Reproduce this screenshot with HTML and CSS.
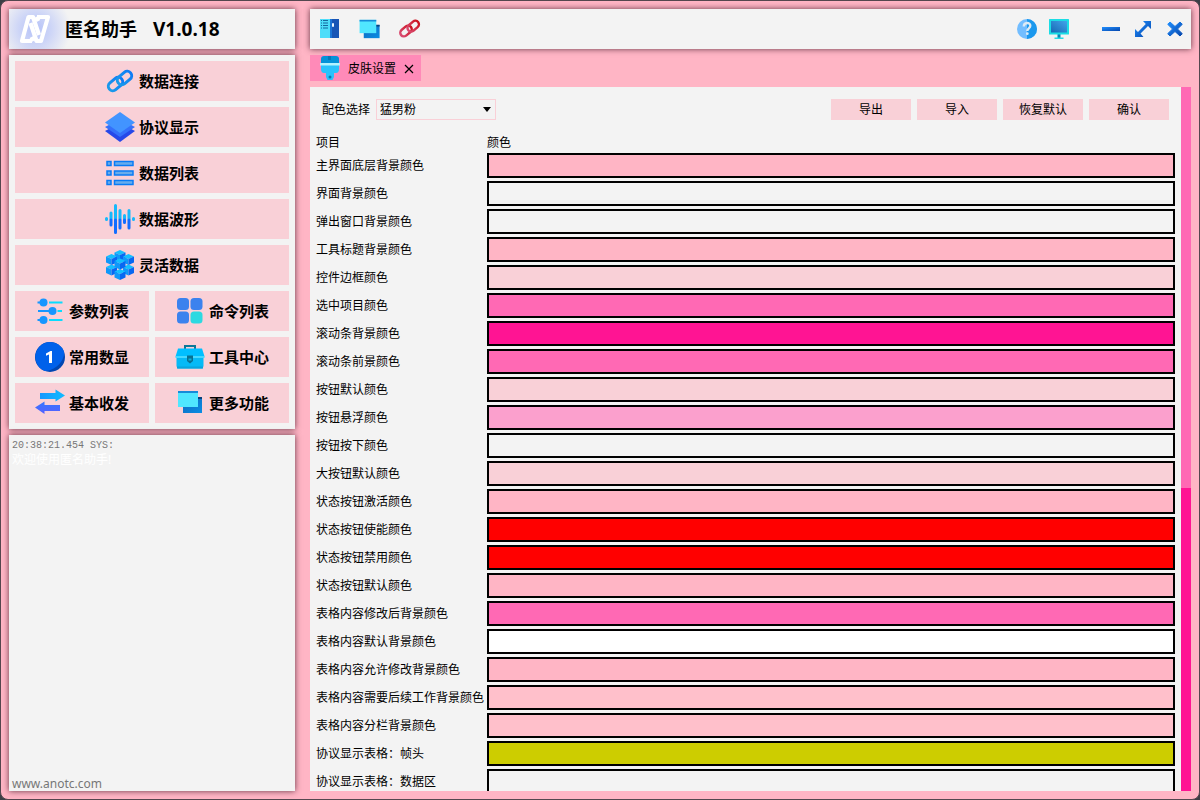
FILE: index.html
```html
<!DOCTYPE html>
<html lang="zh-CN">
<head>
<meta charset="utf-8">
<title>匿名助手 V1.0.18</title>
<link rel="stylesheet" href="styles.css">
</head>
<body>
<svg class="defs" aria-hidden="true">
  <defs>
    <linearGradient id="g-blue" x1="0" y1="0" x2="1" y2="1"><stop offset="0" stop-color="#1f8fff"/><stop offset="1" stop-color="#0546ac"/></linearGradient>
    <linearGradient id="g-link" x1="0" y1="0" x2="1" y2="0"><stop offset="0" stop-color="#1b9bea"/><stop offset="1" stop-color="#0f7bf5"/></linearGradient>
    <linearGradient id="g-red" x1="0" y1="0" x2="1" y2="0"><stop offset="0" stop-color="#d94a70"/><stop offset="1" stop-color="#cc1420"/></linearGradient>
    <linearGradient id="g-back" x1="0" y1="0" x2="1" y2="1"><stop offset="0" stop-color="#0f66bd"/><stop offset="1" stop-color="#0a8ee4"/></linearGradient>
    <linearGradient id="g-screen" x1="0" y1="1" x2="1" y2="0"><stop offset="0" stop-color="#1769b4"/><stop offset="1" stop-color="#41a4ea"/></linearGradient>
    <linearGradient id="g-right" x1="0" y1="0" x2="1" y2="0"><stop offset="0" stop-color="#1598ff"/><stop offset="1" stop-color="#10bbff"/></linearGradient>
    <linearGradient id="g-left" x1="0" y1="0" x2="0" y2="1"><stop offset="0" stop-color="#3478ff"/><stop offset="1" stop-color="#5860ff"/></linearGradient>
    <g id="chain" fill="none" stroke-width="3">
      <rect x="2.500" y="13.500" width="16" height="9" rx="4.500" transform="rotate(-40 10.500 18)"/>
      <rect x="11.500" y="7.500" width="16" height="9" rx="4.500" transform="rotate(-40 19.500 12)"/>
    </g>
    <g id="windows">
      <path d="M7 8h19v16H7z" fill="url(#g-back)"/>
      <path d="M21 8h5v2h-5z" fill="#07417b"/>
      <path d="M2 2h20v16H2z" fill="#50e6ff"/>
      <path d="M2 2h20v2H2z" fill="#168bd8"/>
    </g>
    <g id="cube">
      <path d="M5.500 0L11 2.500 5.500 5 0 2.500z" fill="#14bfff"/>
      <path d="M0 2.500L5.500 5v6L0 8.500z" fill="#0f98fa"/>
      <path d="M11 2.500L5.500 5v6L11 8.500z" fill="#0868f2"/>
    </g>
  </defs>
</svg>

<div class="window">
  <aside class="side">
    <header class="panel brand">
      <svg class="logo" viewBox="0 0 32 30" aria-hidden="true">
        <g fill="none" stroke="#fff" stroke-width="4.200" stroke-linejoin="round"><path d="M14.500 27l-2-4M13 27H3L9.500 3H14l6 18"/><path d="M17 3l2.500 4M18 3h11l-7 24h-4.500L11.500 9"/></g>
      </svg>
      <h1 class="brand-name">匿名助手</h1>
      <span class="brand-version">V1.0.18</span>
    </header>

    <nav class="panel nav">
      <button class="nav-btn wide"><svg viewBox="0 0 30 30"><use href="#chain" stroke="url(#g-link)"/></svg>数据连接</button>
      <button class="nav-btn wide"><svg viewBox="0 0 30 30"><path d="M0 19l15-8 15 8-15 11z" fill="#2648e9"/><path d="M0 15l15-8 15 8-15 10z" fill="#3470fa"/><path d="M0 10.500L15 0l15 10.500L15 21z" fill="#4294ff"/></svg>协议显示</button>
      <button class="nav-btn wide"><svg viewBox="0 0 30 30"><g fill="#68acec" stroke="#087bf5" stroke-width="1.500"><path d="M2 3.500h4v4H2zM9.500 3.500H28v4H9.500zM2 13h4v4H2zM9.500 13H28v4H9.500zM2 22.500h4v4H2zM9.500 22.500H28v4H9.500z"/></g></svg>数据列表</button>
      <button class="nav-btn wide"><svg viewBox="0 0 30 30"><g fill="none" stroke-width="3" stroke-linecap="round"><path d="M1.500 14.500v1M6 9v6M10.500 1.500V15M15 6.500V15M19.500 11.500V15M24 6.500V15M28.500 14.500v1" stroke="#17b9fb"/><path d="M6 16v5M10.500 16v12.500M15 16v8M19.500 16v2.500M24 16v8" stroke="#126dff"/></g></svg>数据波形</button>
      <button class="nav-btn wide"><svg viewBox="0 0 30 30"><use href="#cube" x="9.500" y="0"/><use href="#cube" x="1" y="14.500"/><use href="#cube" x="18" y="14.500"/><use href="#cube" x="1" y="4"/><use href="#cube" x="18" y="4"/><use href="#cube" x="9.500" y="19"/><use href="#cube" x="9.500" y="8.500"/></svg>灵活数据</button>
      <button class="nav-btn"><svg viewBox="0 0 30 30"><path d="M2.500 6.500H12M3 15h16M2.500 24H12" stroke="#1796ff" stroke-width="2"/><path d="M14 6.500h13.500M22.500 15H27M14 24h13.500" stroke="#08dcff" stroke-width="2"/><g fill="#1796ff"><circle cx="8.500" cy="6.500" r="4"/><circle cx="17.500" cy="15" r="4"/><circle cx="8.500" cy="24" r="4"/></g></svg>参数列表</button>
      <button class="nav-btn"><svg viewBox="0 0 30 30"><g fill="#3b82ee"><rect x="2" y="2" width="12" height="12" rx="3.500"/><rect x="15.500" y="2" width="12" height="12" rx="3.500"/><rect x="2" y="15.500" width="12" height="12" rx="3.500"/></g><rect x="15.500" y="15.500" width="12" height="12" rx="3.500" fill="#2cd9e1"/></svg>命令列表</button>
      <button class="nav-btn"><svg viewBox="0 0 30 30"><circle cx="15" cy="15" r="15" fill="#0147b2"/><path d="M15 0a15 15 0 0 1 14 9.500C30 19 20 29 10 29A15 15 0 0 1 15 0z" fill="#0061ea"/><path d="M11 11.500l4.500-2.500H17v12h-3v-8.500l-3 1.200z" fill="#fff"/></svg>常用数显</button>
      <button class="nav-btn"><svg viewBox="0 0 30 30"><path d="M10 7V4h10v3" fill="none" stroke="#0b7898" stroke-width="2"/><path d="M3 6.500h24l2.500 8H.500z" fill="#00bfff"/><path d="M1.500 15h27v9l-1 2.500h-25l-1-2.500z" fill="#05baf6"/><path d="M.500 14h29v2H.500z" fill="#45d9ff"/><path d="M2 24.500h26v2H2z" fill="#08a5dc"/><path d="M12 13.500h6V19l-3 2.500-3-2.500z" fill="#087091"/><path d="M13.500 16.500h3v2h-3z" fill="#08b3dc"/></svg>工具中心</button>
      <button class="nav-btn"><svg viewBox="0 0 30 30"><path d="M5 5h15.500V1.500L30 7.500l-9.500 6V11H5z" fill="url(#g-right)"/><path d="M25 17H9.500v-3.500L0 19.500l9.500 6.500v-3H25z" fill="url(#g-left)"/></svg>基本收发</button>
      <button class="nav-btn"><svg viewBox="0 0 30 30"><use href="#windows" x="1" y="1"/></svg>更多功能</button>
    </nav>

    <section class="panel log">
      <div class="log-lines">
        <p class="log-time">20:38:21.454 SYS:</p>
        <p class="log-text">欢迎使用匿名助手!</p>
      </div>
      <a class="site" href="#">www.anotc.com</a>
    </section>
  </aside>

  <main class="main">
    <header class="panel toolbar">
      <button class="tool" aria-label="面板"><svg viewBox="0 0 20 20"><path d="M0 0h10v19H0z" fill="#4dddfa"/><path d="M10 0h9v19h-9z" fill="#1755b5"/><path d="M10 0h2v19h-2z" fill="#1975d6"/><path d="M1 1.500h1M3 1.500h5M1 4h1M3 4h5M1 6.500h1M3 6.500h5M1 9h1M3 9h5" stroke="#15699e"/><rect x="12" y="4" width="2" height="4" rx="1" fill="#e9f5ff"/></svg></button>
      <button class="tool" aria-label="窗口"><svg class="tool-wide" viewBox="2 1 25 24"><use href="#windows"/></svg></button>
      <button class="tool" aria-label="连接"><svg class="tool-wide" viewBox="1 3 29 25"><use href="#chain" stroke="url(#g-red)"/></svg></button>
      <span class="spacer"></span>
      <div class="tool-group">
        <button class="tool small" aria-label="帮助"><svg viewBox="0 0 20 20"><circle cx="10" cy="10" r="10" fill="#72bdff"/><path d="M10 0a10 10 0 0 1 0 20z" fill="#1b98ed"/><path d="M6.800 7.500c0-4.500 6.500-4.500 6.500-.8 0 2.600-3 2.600-3 5.300" fill="none" stroke="#dceaf5" stroke-width="2.400"/><circle cx="10.300" cy="14.700" r="1.400" fill="#dceaf5"/></svg></button>
        <button class="tool small" aria-label="显示"><svg viewBox="0 0 20 20"><path d="M8.500 14h3v5h-3z" fill="#0787b8"/><rect width="20" height="15.500" rx=".5" fill="#1bdde5"/><path d="M2 2h16v11.500H2z" fill="url(#g-screen)"/><path d="M5.500 18.500h9V20h-9z" fill="#26dbe5"/></svg></button>
      </div>
      <div class="tool-group">
        <button class="tool small" aria-label="最小化"><svg viewBox="0 0 20 20"><path d="M1 8h18v4H1z" fill="url(#g-blue)"/></svg></button>
        <button class="tool small" aria-label="最大化"><svg viewBox="0 0 20 20"><path d="M10 2h8v8l-3-3-7.500 7.500 3 3.500H2v-8l3 3L12.800 5z" fill="url(#g-blue)"/></svg></button>
        <button class="tool small" aria-label="关闭"><svg viewBox="0 0 20 20"><path d="M5 3l5 4.500L15 3l2.300 2.300L12.500 10l4.800 4.700L15 17l-5-4.500L5 17l-2.300-2.300L7.500 10 2.700 5.300z" fill="url(#g-blue)" stroke="url(#g-blue)" stroke-linejoin="round"/></svg></button>
      </div>
    </header>

    <div class="tabs">
      <div class="tab">
        <svg class="tab-icon" viewBox="0 0 20 24" aria-hidden="true"><path d="M1 8h18v5q0 4-3 4h-2v4l-1.500 3h-5L6 21v-4H4q-3 0-3-4z" fill="#29c2fc"/><path d="M1 7V3q0-3 3-3h12q3 0 3 3v4z" fill="#0392d8"/><path d="M8 0h3v4H8z" fill="#0877b6"/><path d="M0 7h20v2.500H0z" fill="#b2f2ff"/><circle cx="10" cy="21" r="1.500" fill="#0878ae"/></svg>
        <span class="tab-title">皮肤设置</span>
        <button class="tab-close" aria-label="关闭标签"><svg viewBox="0 0 10 10"><path d="M1 1l8 8M9 1L1 9" stroke="#000" stroke-width="1.200"/></svg></button>
      </div>
    </div>

    <section class="content">
      <div class="settings">
        <div class="actions">
          <label for="scheme">配色选择</label>
          <span class="select-box">
            <select id="scheme"><option>猛男粉</option></select>
          </span>
          <span class="spacer"></span>
          <button class="action">导出</button>
          <button class="action">导入</button>
          <button class="action">恢复默认</button>
          <button class="action">确认</button>
        </div>
        <table class="colors">
          <thead><tr><th class="item">项目</th><th>颜色</th></tr></thead>
          <tbody>
            <tr><td><label for="c1">主界面底层背景颜色</label></td><td><input type="color" id="c1" value="#ffb5c5"></td></tr>
            <tr><td><label for="c2">界面背景颜色</label></td><td><input type="color" id="c2" value="#f3f3f3"></td></tr>
            <tr><td><label for="c3">弹出窗口背景颜色</label></td><td><input type="color" id="c3" value="#f3f3f3"></td></tr>
            <tr><td><label for="c4">工具标题背景颜色</label></td><td><input type="color" id="c4" value="#ffb5c5"></td></tr>
            <tr><td><label for="c5">控件边框颜色</label></td><td><input type="color" id="c5" value="#f9d0d7"></td></tr>
            <tr><td><label for="c6">选中项目颜色</label></td><td><input type="color" id="c6" value="#ff69b4"></td></tr>
            <tr><td><label for="c7">滚动条背景颜色</label></td><td><input type="color" id="c7" value="#ff1493"></td></tr>
            <tr><td><label for="c8">滚动条前景颜色</label></td><td><input type="color" id="c8" value="#ff69b4"></td></tr>
            <tr><td><label for="c9">按钮默认颜色</label></td><td><input type="color" id="c9" value="#f9d0d7"></td></tr>
            <tr><td><label for="c10">按钮悬浮颜色</label></td><td><input type="color" id="c10" value="#fba0cd"></td></tr>
            <tr><td><label for="c11">按钮按下颜色</label></td><td><input type="color" id="c11" value="#f3f3f3"></td></tr>
            <tr><td><label for="c12">大按钮默认颜色</label></td><td><input type="color" id="c12" value="#f9d0d7"></td></tr>
            <tr><td><label for="c13">状态按钮激活颜色</label></td><td><input type="color" id="c13" value="#ffb5c5"></td></tr>
            <tr><td><label for="c14">状态按钮使能颜色</label></td><td><input type="color" id="c14" value="#ff0000"></td></tr>
            <tr><td><label for="c15">状态按钮禁用颜色</label></td><td><input type="color" id="c15" value="#ff0000"></td></tr>
            <tr><td><label for="c16">状态按钮默认颜色</label></td><td><input type="color" id="c16" value="#ffb5c5"></td></tr>
            <tr><td><label for="c17">表格内容修改后背景颜色</label></td><td><input type="color" id="c17" value="#ff69b4"></td></tr>
            <tr><td><label for="c18">表格内容默认背景颜色</label></td><td><input type="color" id="c18" value="#ffffff"></td></tr>
            <tr><td><label for="c19">表格内容允许修改背景颜色</label></td><td><input type="color" id="c19" value="#ffb5c5"></td></tr>
            <tr><td><label for="c20">表格内容需要后续工作背景颜色</label></td><td><input type="color" id="c20" value="#ffc0cb"></td></tr>
            <tr><td><label for="c21">表格内容分栏背景颜色</label></td><td><input type="color" id="c21" value="#ffc0cb"></td></tr>
            <tr><td><label for="c22">协议显示表格：帧头</label></td><td><input type="color" id="c22" value="#cdcd00"></td></tr>
            <tr><td><label for="c23">协议显示表格：数据区</label></td><td><input type="color" id="c23" value="#f3f3f3"></td></tr>
          </tbody>
        </table>
      </div>
      <div class="scrollbar"><div class="thumb"></div></div>
    </section>
  </main>
</div>
</body>
</html>
```
FILE: styles.css
```css
* { box-sizing: border-box; }

body {
  margin: 0;
  background: #3c3f46;
  color: #000;
  font: 12px/16px "Noto Sans", "Noto Sans CJK SC", sans-serif;
}

h1, p { margin: 0; }

button {
  border: 0;
  padding: 0;
  background: none;
  color: inherit;
  font: inherit;
}

svg { display: block; }

.defs {
  position: absolute;
  width: 0;
  height: 0;
}

.window {
  display: flex;
  gap: 15px;
  height: 100vh;
  padding: 8px;
  border: 1px solid #55474f;
  border-radius: 8px;
  background: #ffb5c5;
}

.panel {
  background: #f3f3f3;
  box-shadow: 0 0 6px rgba(60, 20, 35, 0.8);
}

.spacer { flex: 1; }

/* Left column */

.side {
  display: flex;
  flex: 0 0 286px;
  flex-direction: column;
  gap: 6px;
}

.brand {
  display: flex;
  align-items: center;
  height: 40px;
  padding-left: 10px;
  background: radial-gradient(circle at 26px 20px, #b4c1f8 0, #cdd5f7 16px, #f3f3f3 36px);
  font-size: 18px;
  line-height: 24px;
  font-weight: 700;
}

.logo {
  width: 32px;
  height: 30px;
  margin-right: 14px;
}

.brand-name { font: inherit; }

.brand-version {
  margin-left: 16px;
  font-size: 19px;
}

.nav {
  display: grid;
  grid-template-columns: 1fr 1fr;
  gap: 6px;
  padding: 6px;
}

.nav-btn {
  display: flex;
  align-items: center;
  justify-content: center;
  gap: 4px;
  height: 40px;
  background: #f9d0d7;
  font-size: 15px;
  font-weight: 700;
}

.nav-btn svg {
  width: 30px;
  height: 30px;
}

.wide { grid-column: span 2; }

.log {
  display: flex;
  flex: 1;
  flex-direction: column;
  justify-content: space-between;
  padding: 4px 3px 0;
}

.log-time {
  color: #777;
  font: 10px/14px "Liberation Mono", monospace;
}

.log-text {
  color: #fff;
  line-height: 14px;
}

.site {
  color: #777;
  line-height: 14px;
  text-decoration: none;
}

/* Right column */

.main {
  display: flex;
  flex: 1;
  flex-direction: column;
  gap: 6px;
  min-width: 0;
}

.toolbar {
  display: flex;
  height: 40px;
}

.tool {
  display: flex;
  align-items: center;
  justify-content: center;
  width: 40px;
}

.tool svg {
  width: 20px;
  height: 20px;
}

.tool .tool-wide { width: 24px; }

.tool-group {
  display: flex;
  margin-left: 20px;
}

.small { width: 32px; }

.tabs { display: flex; }

.tab {
  display: flex;
  align-items: center;
  gap: 8px;
  height: 26px;
  padding: 0 7px 0 10px;
  background: #ff8ab8;
}

.tab-icon {
  width: 20px;
  height: 24px;
}

.tab-title { padding-top: 2px; }

.tab-close { padding-top: 2px; }

.tab-close svg {
  width: 10px;
  height: 10px;
}

.content {
  display: flex;
  flex: 1;
  min-height: 0;
  background: #f3f3f3;
}

.settings {
  flex: 1;
  overflow: hidden;
  padding: 12px 6px 0;
}

.actions {
  display: flex;
  align-items: center;
  gap: 6px;
  padding: 0 6px;
}

.select-box {
  position: relative;
  width: 120px;
  height: 21px;
}

.select-box::after {
  position: absolute;
  top: 8px;
  right: 5px;
  border: 4px solid transparent;
  border-top: 5px solid #000;
  border-bottom: 0;
  content: "";
  pointer-events: none;
}

select {
  appearance: none;
  width: 100%;
  height: 100%;
  padding: 0 3px;
  border: 1px solid #f9d0d7;
  border-radius: 0;
  background: #f3f3f3;
  color: #000;
  font: inherit;
}

.action {
  width: 80px;
  height: 21px;
  padding-top: 1px;
  background: #f9d0d7;
}

.colors {
  width: 100%;
  margin-top: 11px;
  border-collapse: collapse;
  table-layout: fixed;
}

.colors th {
  height: 22px;
  padding: 2px 0 0;
  font-weight: 400;
  text-align: left;
}

.item { width: 171px; }

.colors td {
  height: 28px;
  padding: 0 0 3px;
  white-space: nowrap;
}

input[type="color"] {
  appearance: none;
  display: block;
  width: 100%;
  height: 25px;
  padding: 0;
  border: 2px solid #000;
  background: none;
}

input[type="color"]::-webkit-color-swatch-wrapper { padding: 0; }

input[type="color"]::-webkit-color-swatch {
  border: 0;
  border-radius: 0;
}

.scrollbar {
  width: 10px;
  background: #ff1493;
}

.thumb {
  height: 57%;
  background: #ff69b4;
}
```
